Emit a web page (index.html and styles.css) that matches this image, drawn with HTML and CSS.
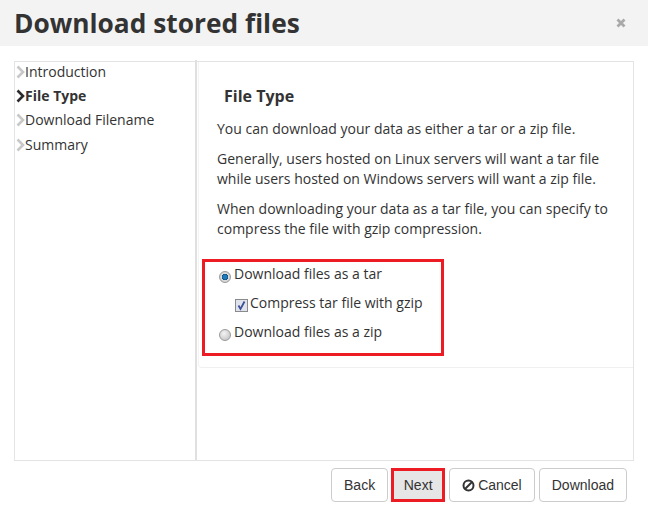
FILE: index.html
```html
<!DOCTYPE html>
<html lang="en">
<head>
<meta charset="utf-8">
<title>Download stored files</title>
<link rel="stylesheet" href="styles.css">
</head>
<body>
<div class="dialog">
  <header class="head">
    <h1>Download stored files</h1>
    <svg class="close" width="10" height="10" viewBox="0 0 10 10"><path d="M1.500 1.500l7 7M8.500 1.500l-7 7" stroke="#a9a9a9" stroke-width="2.800" fill="none"/></svg>
  </header>
  <div class="wizard">
    <nav class="steps">
      <div class="step"><svg class="chev" width="9" height="14" viewBox="0 0 9 14"><path d="M1.500 1.500L7 7l-5.500 5.500" fill="none" stroke="#c8c8c8" stroke-width="2.600"/></svg>Introduction</div>
      <div class="step active"><svg class="chev" width="9" height="14" viewBox="0 0 9 14"><path d="M1.500 1.500L7 7l-5.500 5.500" fill="none" stroke="#2b2b2b" stroke-width="2.600"/></svg>File Type</div>
      <div class="step"><svg class="chev" width="9" height="14" viewBox="0 0 9 14"><path d="M1.500 1.500L7 7l-5.500 5.500" fill="none" stroke="#c8c8c8" stroke-width="2.600"/></svg>Download Filename</div>
      <div class="step"><svg class="chev" width="9" height="14" viewBox="0 0 9 14"><path d="M1.500 1.500L7 7l-5.500 5.500" fill="none" stroke="#c8c8c8" stroke-width="2.600"/></svg>Summary</div>
    </nav>
    <main class="content">
      <div class="panel">
        <h2>File Type</h2>
        <p>You can download your data as either a tar or a zip file.</p>
        <p>Generally, users hosted on Linux servers will want a tar file<br>while users hosted on Windows servers will want a zip file.</p>
        <p>When downloading your data as a tar file, you can specify to<br>compress the file with gzip compression.</p>
        <div class="options">
          <div class="opt"><span class="radio on"></span>Download files as a tar</div>
          <div class="opt sub"><span class="check"><svg width="11" height="11" viewBox="0 0 11 11"><path d="M2.500 5.500l2 3.500L8.500 1.500" fill="none" stroke="#3d4f96" stroke-width="1.800"/></svg></span>Compress tar file with gzip</div>
          <div class="opt"><span class="radio"></span>Download files as a zip</div>
        </div>
      </div>
    </main>
  </div>
  <footer class="foot">
    <button class="btn">Back</button>
    <button class="btn next">Next</button>
    <button class="btn"><svg class="ban" width="13" height="13" viewBox="0 0 13 13"><circle cx="6.500" cy="6.500" r="5" fill="none" stroke="#333" stroke-width="2"/><path d="M3 10L10 3" stroke="#333" stroke-width="2"/></svg>Cancel</button>
    <button class="btn">Download</button>
  </footer>
</div>
</body>
</html>
```
FILE: styles.css
```css
* { box-sizing: border-box; }
html, body { margin: 0; padding: 0; background: #fff; }
body { width: 648px; height: 521px; overflow: hidden; font-family: "Open Sans", sans-serif; color: #333; font-size: 14px; }
.head { height: 46px; background: #f3f3f3; display: flex; align-items: center; justify-content: space-between; padding: 0 22px 0 14px; }
.head h1 { margin: 0; font-size: 26.300px; font-weight: 700; line-height: 48px; color: #333; }
.close { margin-top: 0; }
.wizard { display: flex; height: 400px; margin: 15px 14px 0; border: 1px solid #e4e4e4; }
.steps { width: 182px; flex: none; border-right: 2px solid #e0e0e0; margin-top: -2.400px; }
.step { display: flex; align-items: center; height: 24.300px; font-size: 14px; color: #333; padding-left: 1px; line-height: 20px; }
.step.active { font-weight: 700; }
.chev { flex: none; }
.content { flex: 1; padding: 0 0 0 1px; }
.panel { height: 306px; border-bottom: 1px solid #f0f0f0; border-left: 1px solid #f3f3f3; border-radius: 0 0 0 4px; padding-left: 18px; }
.panel h2 { margin: 0; padding: 23px 0 0 7px; font-size: 16px; font-weight: 700; line-height: 22px; }
.panel p { margin: 0 0 10px; line-height: 20px; font-size: 14px; }
.panel h2 + p { margin-top: 12px; }
.options { width: 242px; height: 97px; margin: 20px 0 0 -15px; border: 3px solid #ed1c24; padding: 0 0 0 14px; }
.opt { display: flex; align-items: center; height: 29px; padding-bottom: 7px; }
.opt.sub { padding-left: 16px; }
.radio { width: 12px; height: 12px; border-radius: 50%; margin: 7px 3px 0 0; border: 1px solid #9a9a9a; background: radial-gradient(circle at 40% 35%, #f4f4f4, #bcbcbc); flex: none; }
.radio.on { background: radial-gradient(circle, #1f7ab8 0 2px, #0d4d80 3px, #dcdcdc 3.500px, #c4c4c4); }
.check { width: 13px; height: 13px; margin: 7px 2px 0 0; border: 1px solid #8a8a8a; background: #dfe3ee; display: flex; align-items: center; justify-content: center; flex: none; }
.foot { display: flex; justify-content: flex-end; gap: 4px; padding: 7px 21px 0 0; }
.btn { height: 34px; padding: 0 12px; font-family: "Liberation Sans", Arial, sans-serif; font-size: 14px; color: #333; background: #fff; border: 1px solid #ccc; border-radius: 4px; display: flex; align-items: center; }
.btn.next { background: #e6e6e6; border: 3px solid #ed1c24; border-radius: 0; padding: 0 10px; margin-left: -1px; width: 54px; justify-content: center; }
.ban { margin-right: 3px; }
```
